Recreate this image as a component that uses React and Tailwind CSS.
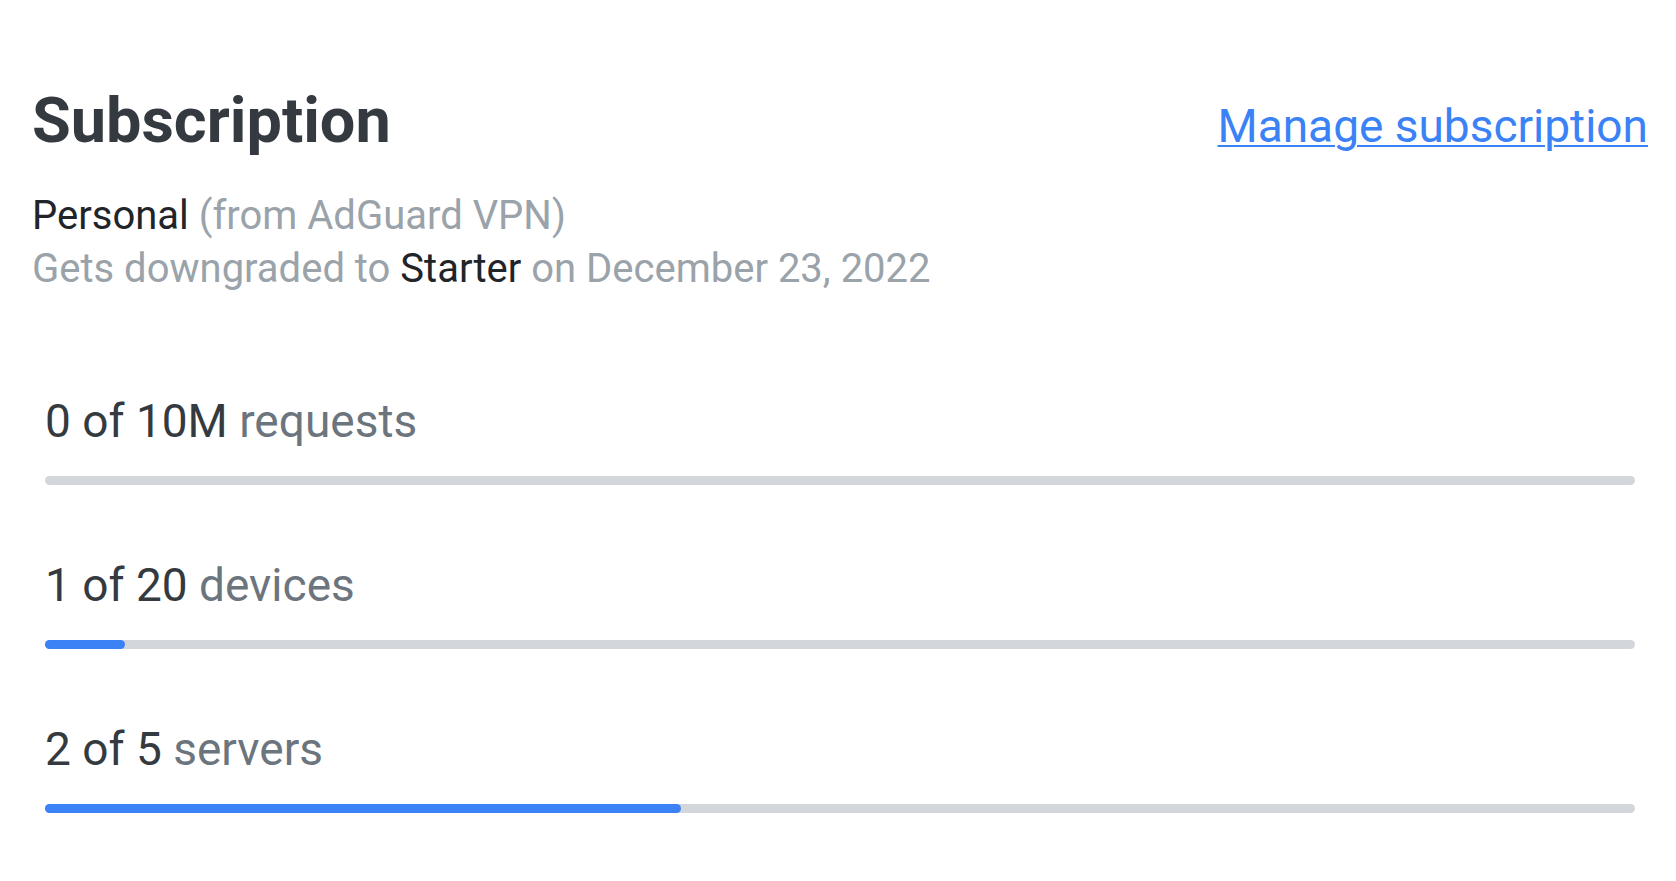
const usage = [
    { used: '0', total: '10M', unit: 'requests', percent: 0 },
    { used: '1', total: '20', unit: 'devices', percent: 5 },
    { used: '2', total: '5', unit: 'servers', percent: 40 },
]

const UsageBar = ({ item }) => {
    return (
        <div>
            <div className="text-[46px] leading-none text-[#343a40]">
                {item.used} of {item.total} <span className="text-[#6c757d]">{item.unit}</span>
            </div>
            <div className="mt-[32px] h-[9px] w-full rounded-full bg-[#d3d6da]">
                {item.percent > 0 && (
                    <div className="h-full rounded-full bg-[#3b82f6]" style={{ width: `${item.percent}%` }} />
                )}
            </div>
        </div>
    )
}

const App = () => {
    return (
        <div className="min-h-screen bg-white pl-[32px] pr-[28px] pt-[89px] font-['Roboto',sans-serif]">
            <header className="flex items-baseline justify-between">
                <h2 className="text-[63px] font-bold leading-none text-[#343a40]">Subscription</h2>
                <a href="#" className="text-[46px] leading-none text-[#3b82f6] underline decoration-2 underline-offset-[3px]">
                    Manage subscription
                </a>
            </header>

            <div className="mt-[37px] text-[40px] leading-[53px]">
                <div className="text-[#212529]">
                    Personal <span className="text-[#9aa2aa]">(from AdGuard VPN)</span>
                </div>
                <div className="text-[#9aa2aa]">
                    Gets downgraded to <span className="text-[#212529]">Starter</span> on December 23, 2022
                </div>
            </div>

            <div className="mt-[103px] flex flex-col gap-[77px] px-[13px]">
                {usage.map((item) => (
                    <UsageBar key={item.unit} item={item} />
                ))}
            </div>
        </div>
    )
}

export default App
